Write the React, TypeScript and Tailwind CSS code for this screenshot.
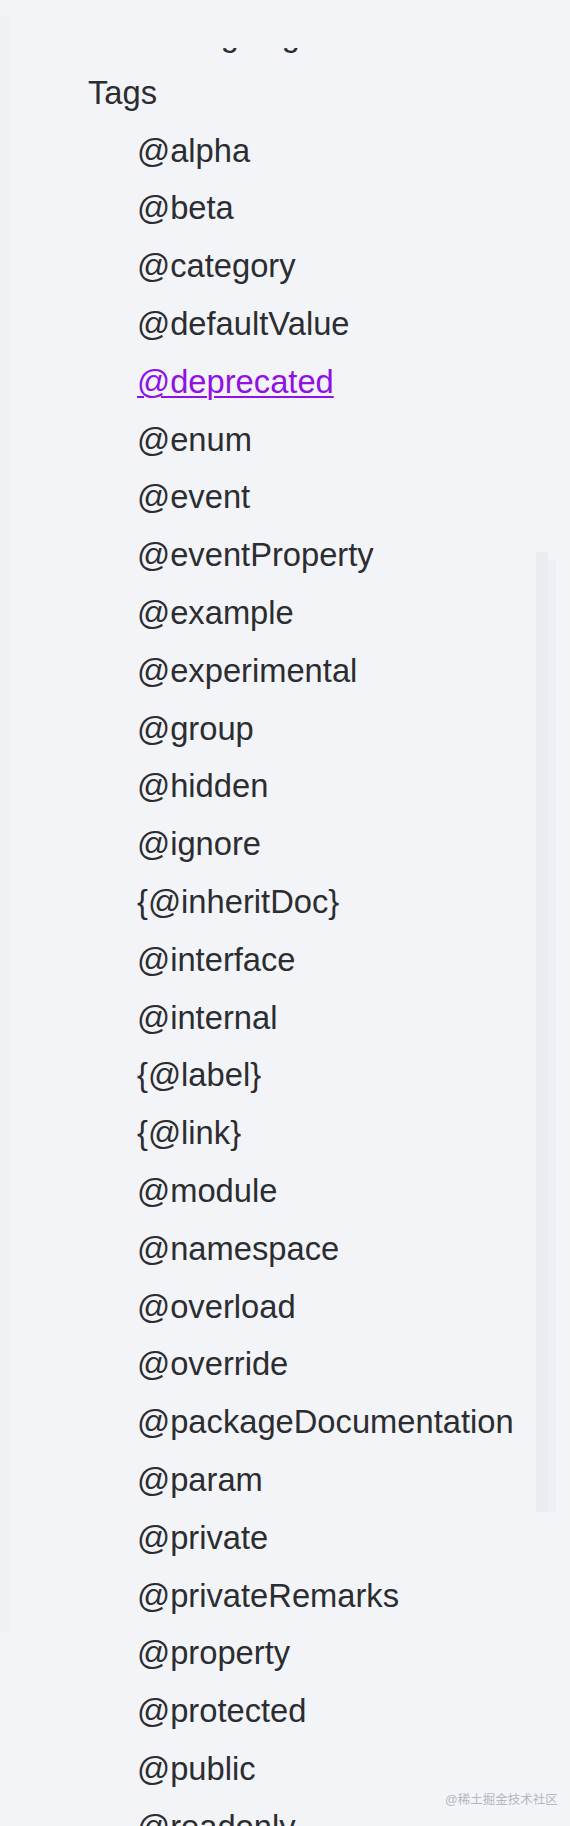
const tags = [
  "@alpha",
  "@beta",
  "@category",
  "@defaultValue",
  "@deprecated",
  "@enum",
  "@event",
  "@eventProperty",
  "@example",
  "@experimental",
  "@group",
  "@hidden",
  "@ignore",
  "{@inheritDoc}",
  "@interface",
  "@internal",
  "{@label}",
  "{@link}",
  "@module",
  "@namespace",
  "@overload",
  "@override",
  "@packageDocumentation",
  "@param",
  "@private",
  "@privateRemarks",
  "@property",
  "@protected",
  "@public",
  "@readonly",
  "@remarks",
  "@returns",
];

export default function App() {
  return (
    <div
      className="relative h-[1826px] w-full overflow-hidden bg-[#f3f4f8] text-[#2b2d31]"
      style={{ fontFamily: '"Liberation Sans", Arial, sans-serif' }}
    >
      <nav className="flex flex-col pl-[88px] pt-[6px] text-[32.7px] leading-[57.8px]">
        <div>Rendering Tags</div>
        <div>Tags</div>
        <ul className="flex flex-col pl-[49px]">
          {tags.map((t) => (
            <li key={t}>
              {t === "@deprecated" ? (
                <a href="#deprecated" className="text-[#9010e6] underline decoration-2 underline-offset-[3px]">
                  {t}
                </a>
              ) : (
                t
              )}
            </li>
          ))}
        </ul>
      </nav>

      <div className="absolute left-0 top-0 h-[48px] w-full bg-[#f3f4f8]" />

      {/* faint page edge and scrollbar track */}
      <div className="absolute left-0 top-[16px] h-[1616px] w-[10px] bg-[#f0f1f5]" />
      <div className="absolute left-[536px] top-[552px] h-[960px] w-[12px] bg-[#ebecf0]" />
      <div className="absolute left-[548px] top-[560px] h-[952px] w-[8px] bg-[#eff0f5]" />

      <div
        className="absolute left-[445px] top-[1791px] text-[12.5px] leading-[18px] text-[#b4b7bc]"
        style={{ fontFamily: '"Liberation Sans", "Noto Sans CJK SC", sans-serif' }}
      >
        @稀土掘金技术社区
      </div>
    </div>
  );
}
